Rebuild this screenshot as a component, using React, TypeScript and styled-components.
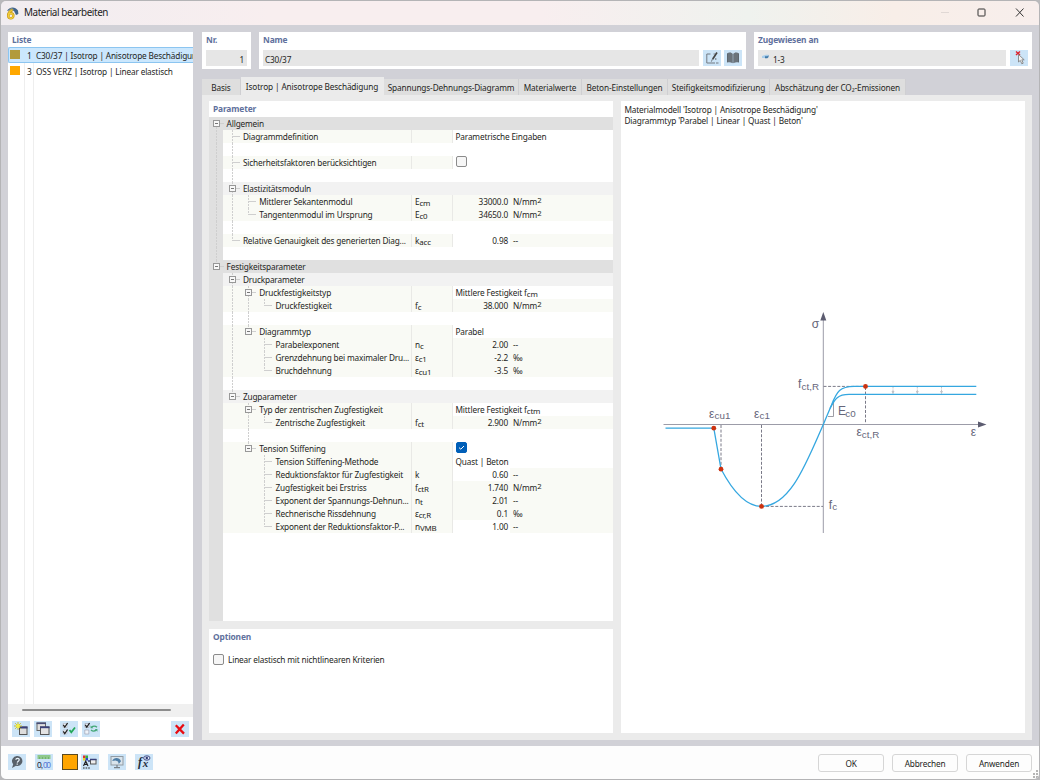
import { Fragment, ReactNode } from "react";
import styled, { createGlobalStyle, css } from "styled-components";

const GlobalStyle = createGlobalStyle`
  * { box-sizing: border-box; }
  html, body { margin: 0; padding: 0; }
  body {
    width: 1040px;
    height: 780px;
    overflow: hidden;
    background: #b9b9bb;
    font-family: "Noto Sans", "Open Sans", sans-serif;
    font-size: 8.25px;
    letter-spacing: -0.16px;
    line-height: 13px;
    color: #1e1e22;
  }
`;

const Window = styled.div`
  display: flex;
  flex-direction: column;
  width: 1040px;
  height: 780px;
  background: #d1d1d7;
  border: 1px solid #b4b4b6;
  border-radius: 6px;
  overflow: hidden;
`;

const TitleBar = styled.header`
  display: flex;
  align-items: center;
  flex: none;
  height: 24px;
  padding: 0 14px 1px 5px;
  background: linear-gradient(90deg, #f1edf0 0%, #f8eeef 26%, #f8eeef 52%, #eff2ee 72%, #f8eee8 86%, #f7eeec 100%);
`;

const Title = styled.h1`
  flex: 1;
  margin: 0 0 0 5px;
  font-size: 9.9px;
  font-weight: 400;
  letter-spacing: -0.4px;
  color: #222;
`;

const WindowControls = styled.div`
  display: flex;
  align-items: center;
  gap: 28px;

  svg { display: block; }
`;

const Body = styled.main`
  display: flex;
  flex: none;
  gap: 9px;
  height: 721px;
  padding: 7px 7px 6px 7px;
`;

const Heading = styled.h2`
  flex: none;
  margin: 0;
  padding: 1px 4px 0;
  font-size: 8.4px;
  line-height: 14px;
  letter-spacing: -0.14px;
  font-weight: 700;
  color: #5f719d;
`;

const ListPanel = styled.aside`
  display: flex;
  flex-direction: column;
  flex: none;
  width: 185px;
  height: 708px;
  background: #fff;
`;

const ListRows = styled.div`
  flex: 1;
  min-height: 0;
  background: linear-gradient(90deg, transparent 16px, #eee 16px, #eee 17px, transparent 17px, transparent 25px, #eee 25px, #eee 26px, transparent 26px);
`;

const ListRow = styled.div<{ $selected?: boolean }>`
  display: flex;
  align-items: center;
  height: 15px;
  padding: 1px 0 0 1px;
  white-space: nowrap;
  overflow: hidden;
  border: 1px solid transparent;
  border-right: 0;
  ${(p) =>
    p.$selected &&
    css`
      height: 16px;
      background: #cbe7fd;
      border-color: #8cc5f0;
      border-radius: 2px 0 0 2px;
    `}
`;

const Swatch = styled.span<{ $color: string }>`
  flex: none;
  width: 9.5px;
  height: 9px;
  margin-bottom: 2px;
  background: ${(p) => p.$color};
`;

const ListNumber = styled.span`
  flex: none;
  width: 12px;
  margin-right: 4.5px;
  text-align: right;
`;

const ScrollTrack = styled.div`
  flex: none;
  height: 13px;
  padding: 5px 22px 0 14px;
  background: #f0f0f0;
`;

const ScrollThumb = styled.div`
  height: 2px;
  border-radius: 1px;
  background: #8c8c8c;
`;

const ListTools = styled.div`
  display: flex;
  flex: none;
  gap: 4px;
  height: 23px;
  padding: 4px 4px 0 4px;
`;

const IconButton = styled.button<{ $gapBefore?: number; $last?: boolean }>`
  display: flex;
  align-items: center;
  justify-content: center;
  flex: none;
  width: 18px;
  height: 16px;
  margin: 0 0 0 ${(p) => (p.$last ? "auto" : `${p.$gapBefore ?? 0}px`)};
  padding: 0;
  border: 0;
  background: #cce4f7;

  svg { display: block; }
`;

const Main = styled.section`
  display: flex;
  flex-direction: column;
  width: 830px;
`;

const TopFields = styled.div`
  display: flex;
  flex: none;
  gap: 8px;
  height: 37px;
`;

const FieldCard = styled.div<{ $width: number }>`
  width: ${(p) => p.$width}px;
  background: #fff;
`;

const FieldRow = styled.div`
  display: flex;
  gap: 3px;
  padding: 3px 4px 0;
`;

const Field = styled.div<{ $align?: string }>`
  display: flex;
  align-items: center;
  justify-content: ${(p) => p.$align ?? "flex-start"};
  flex: 1;
  height: 16px;
  padding: 2px 3px 0 2px;
  background: #e6e6e6;
`;

const Tabs = styled.nav`
  display: flex;
  align-items: flex-end;
  flex: none;
  height: 26px;
`;

const Tab = styled.div<{ $width: number; $active?: boolean }>`
  flex: none;
  width: ${(p) => p.$width}px;
  height: ${(p) => (p.$active ? 18 : 16)}px;
  line-height: ${(p) => (p.$active ? 20 : 17)}px;
  letter-spacing: -0.13px;
  text-align: center;
  white-space: nowrap;
  background: ${(p) => (p.$active ? "#ebebeb" : "#dedede")};
  border-right: 1px solid ${(p) => (p.$active ? "#ebebeb" : "#cfcfd2")};
`;

const TabPage = styled.div`
  display: flex;
  gap: 8px;
  flex: 1;
  padding: 6px 7px 7px;
  background: #ebebeb;
`;

const Column = styled.div`
  display: flex;
  flex-direction: column;
  gap: 8px;
  width: 404px;
`;

const Card = styled.div<{ $height: number }>`
  display: flex;
  flex-direction: column;
  height: ${(p) => p.$height}px;
  background: #fff;
`;

const Tree = styled.div`
  display: flex;
  flex-direction: column;
  flex: 1;
  margin-top: 1px;
  background: linear-gradient(90deg, #e0e0e0 14px, #fff 14px);
`;

type Kind = "group" | "section" | "param" | "blank";

const rowColor: Record<Kind, string> = {
  group: "#e0e0e0",
  section: "#f2f2f2",
  param: "#f9faf5",
  blank: "transparent",
};

const TreeRow = styled.div<{ $kind: Kind }>`
  display: flex;
  flex: none;
  height: 13px;
  line-height: 13px;
  white-space: nowrap;
  background: ${(p) =>
    p.$kind === "group"
      ? rowColor.group
      : `linear-gradient(90deg, transparent 14px, ${rowColor[p.$kind]} 14px)`};
`;

const LabelCell = styled.div`
  display: flex;
  flex: none;
  width: 202px;
`;

const line = "#cfcfcf";
const dash = `repeating-linear-gradient(180deg, ${line} 0 2px, transparent 2px 3px)`;

// one cell of the branch drawing: | pass, t tee, l corner, B/b/e boxes
const Branch = styled.span<{ $shape: string; $first?: boolean }>`
  display: flex;
  align-items: center;
  justify-content: center;
  flex: none;
  width: ${(p) => (p.$first ? 15.6 : 16.3)}px;
  height: 13px;
  background-repeat: no-repeat;
  ${(p) => {
    const stub = `linear-gradient(${line}, ${line})`;
    const parts: string[] = [];
    if ("|tb".includes(p.$shape)) parts.push(`${dash} 7px 0 / 1px 13px no-repeat`);
    if ("le".includes(p.$shape)) parts.push(`${dash} 7px 0 / 1px 7px no-repeat`);
    if (p.$shape === "B") parts.push(`${dash} 7px 7px / 1px 6px no-repeat`);
    if ("tlbeB".includes(p.$shape)) parts.push(`${stub} 8px 6px / 7px 1px no-repeat`);
    return parts.length ? `background: ${parts.join(",")};` : "";
  }}
`;

const Expander = styled.span`
  width: 7px;
  height: 7px;
  margin-right: 1px;
  border: 1px solid #989898;
  background: linear-gradient(#777, #777) 1px 2px / 3px 1px no-repeat #f8f8f8;
`;

const LabelText = styled.span`
  padding-left: 2px;
`;

const SymbolCell = styled.div`
  flex: none;
  width: 41px;
  padding-left: 3px;
  border-left: 1px solid #e9e9e6;
`;

const ValueCell = styled.div<{ $editable?: boolean }>`
  flex: none;
  width: 58px;
  padding-right: 2px;
  text-align: right;
  border-left: 1px solid #e9e9e6;
  background: ${(p) => (p.$editable ? "#fff" : "transparent")};
`;

const UnitCell = styled.div`
  flex: 1;
  padding-left: 3px;
`;

const WideValue = styled.div`
  flex: 1;
  padding-left: 2.5px;
  border-left: 1px solid #e9e9e6;
  background: #fff;
`;

const Sub = styled.span`
  position: relative;
  top: 1px;
  font-size: 7.9px;
`;

const Sup = styled.span`
  position: relative;
  top: -2px;
  font-size: 7.7px;
`;

const CheckBox = styled.span<{ $checked?: boolean }>`
  display: flex;
  align-items: center;
  justify-content: center;
  flex: none;
  width: 11px;
  height: 11px;
  border: 1px solid ${(p) => (p.$checked ? "#005fb8" : "#8b8b8b")};
  border-radius: 2px;
  background: ${(p) => (p.$checked ? "#005fb8" : "#f6f6f6")};
`;

const OptionRow = styled.label`
  display: flex;
  align-items: center;
  gap: 4px;
  padding: 9px 4px 0;
`;

const DiagramCard = styled.div`
  width: 404px;
  height: 632px;
  background: #fff;
`;

const DiagramText = styled.p`
  height: 24px;
  margin: 0;
  padding: 3px 3.5px 0;
  line-height: 11px;
`;

const Footer = styled.footer`
  display: flex;
  align-items: center;
  flex: 1;
  padding: 0 6px 1px 7px;
  background: #fdfdfd;
`;

const FooterButtons = styled.div`
  display: flex;
  gap: 8px;
  margin: 1px 0 0 auto;
`;

const PushButton = styled.button`
  width: 66px;
  height: 18px;
  padding: 1px 0 0;
  border: 1px solid #d6d6d6;
  border-radius: 3px;
  background: #fdfdfd;
  font: inherit;
  letter-spacing: inherit;
  line-height: 15px;
  color: #1e1e22;
`;

const ColorButton = styled.span`
  width: 16px;
  height: 16px;
  margin-left: 9px;
  border: 1px solid #5b4a20;
  background: #ffa500;
`;

interface RowData {
  branch: string;
  kind: Kind;
  label?: string;
  symbol?: [string, string];
  value?: string;
  unit?: string;
  editable?: boolean;
  wide?: ReactNode;
}

const blank = (branch: string): RowData => ({ branch, kind: "blank" });
const NMM = "N/mm2";

const rows: RowData[] = [
  { branch: "B", kind: "group", label: "Allgemein" },
  { branch: "|t", kind: "param", label: "Diagrammdefinition", wide: "Parametrische Eingaben" },
  blank("||"),
  { branch: "|t", kind: "param", label: "Sicherheitsfaktoren berücksichtigen", wide: <CheckBox /> },
  blank("||"),
  { branch: "|b", kind: "section", label: "Elastizitätsmoduln" },
  { branch: "||t", kind: "param", label: "Mittlerer Sekantenmodul", symbol: ["E", "cm"], value: "33000.0", unit: NMM },
  { branch: "||l", kind: "param", label: "Tangentenmodul im Ursprung", symbol: ["E", "c0"], value: "34650.0", unit: NMM },
  blank("||"),
  { branch: "|l", kind: "param", label: "Relative Genauigkeit des generierten Diag...", symbol: ["k", "acc"], value: "0.98", unit: "--", editable: true },
  blank("|"),
  { branch: "e", kind: "group", label: "Festigkeitsparameter" },
  { branch: " b", kind: "section", label: "Druckparameter" },
  { branch: " |b", kind: "param", label: "Druckfestigkeitstyp", wide: <>Mittlere Festigkeit f<Sub>cm</Sub></> },
  { branch: " ||l", kind: "param", label: "Druckfestigkeit", symbol: ["f", "c"], value: "38.000", unit: NMM },
  blank(" ||"),
  { branch: " |e", kind: "param", label: "Diagrammtyp", wide: "Parabel" },
  { branch: " | t", kind: "param", label: "Parabelexponent", symbol: ["n", "c"], value: "2.00", unit: "--" },
  { branch: " | t", kind: "param", label: "Grenzdehnung bei maximaler Dru...", symbol: ["ε", "c1"], value: "-2.2", unit: "‰" },
  { branch: " | l", kind: "param", label: "Bruchdehnung", symbol: ["ε", "cu1"], value: "-3.5", unit: "‰" },
  blank(" |"),
  { branch: " e", kind: "section", label: "Zugparameter" },
  { branch: "  b", kind: "param", label: "Typ der zentrischen Zugfestigkeit", wide: <>Mittlere Festigkeit f<Sub>ctm</Sub></> },
  { branch: "  |l", kind: "param", label: "Zentrische Zugfestigkeit", symbol: ["f", "ct"], value: "2.900", unit: NMM },
  blank("  |"),
  { branch: "  e", kind: "param", label: "Tension Stiffening", wide: <CheckBox $checked><svg width="9" height="9" viewBox="0 0 9 9"><path d="M2 4.6 3.8 6.2 7 3" fill="none" stroke="#fff" strokeWidth="1" /></svg></CheckBox> },
  { branch: "   t", kind: "param", label: "Tension Stiffening-Methode", wide: "Quast | Beton" },
  { branch: "   t", kind: "param", label: "Reduktionsfaktor für Zugfestigkeit", symbol: ["k", ""], value: "0.60", unit: "--", editable: true },
  { branch: "   t", kind: "param", label: "Zugfestigkeit bei Erstriss", symbol: ["f", "ctR"], value: "1.740", unit: NMM },
  { branch: "   t", kind: "param", label: "Exponent der Spannungs-Dehnun...", symbol: ["n", "t"], value: "2.01", unit: "--" },
  { branch: "   t", kind: "param", label: "Rechnerische Rissdehnung", symbol: ["ε", "cr,R"], value: "0.1", unit: "‰" },
  { branch: "   l", kind: "param", label: "Exponent der Reduktionsfaktor-P...", symbol: ["n", "VMB"], value: "1.00", unit: "--", editable: true },
];

function ParameterRow({ row }: { row: RowData }) {
  return (
    <TreeRow $kind={row.kind}>
      <LabelCell>
        {row.branch.split("").map((shape, i) => (
          <Branch key={i} $shape={shape} $first={i === 0}>
            {"Bbe".includes(shape) && <Expander />}
          </Branch>
        ))}
        <LabelText>{row.label}</LabelText>
      </LabelCell>
      {row.kind === "param" && (
        <Fragment>
          <SymbolCell>
            {row.symbol && (
              <>
                {row.symbol[0]}
                <Sub>{row.symbol[1]}</Sub>
              </>
            )}
          </SymbolCell>
          {row.wide ? (
            <WideValue>{row.wide}</WideValue>
          ) : (
            <>
              <ValueCell $editable={row.editable}>{row.value}</ValueCell>
              <UnitCell>{row.unit === NMM ? <>N/mm<Sup>2</Sup></> : row.unit}</UnitCell>
            </>
          )}
        </Fragment>
      )}
    </TreeRow>
  );
}

const SvgText = styled.text`
  font-family: "Liberation Sans", Arial, sans-serif;
  font-size: 12px;
  letter-spacing: 0;
  fill: #66667a;

  tspan { font-size: 9.8px; }
`;

function StressStrainDiagram() {
  return (
    <svg width="404" height="260" viewBox="621 300 404 260" style={{ display: "block", marginTop: 175 }}>
      <g stroke="#9c9ca8" strokeWidth="1" fill="none">
        <path d="M663.5 424.5H980M823.3 320V533" />
        <path d="M828 416.5H833.5V401" stroke="#85858f" strokeWidth=".8" />
      </g>
      <path d="M823.3 312 820.3 320.5H826.3ZM986.5 424.5 978 421.5V427.5Z" fill="#5c5c70" />
      <g stroke="#7a7a88" strokeWidth="1" strokeDasharray="3 1.6" fill="none">
        <path d="M823.5 386.4H865M865.5 387V423.5M721 425V469M761.5 425V506M761.5 506.4H823" />
      </g>
      <g stroke="#c2c2c6" strokeWidth="1" strokeDasharray="1.5 1">
        <path d="M893 387V394M917.3 387V394M941.5 387V394" />
      </g>
      <path d="M891.5 391H894.5L893 394ZM915.8 391H918.8L917.3 394ZM940 391H943L941.5 394Z" fill="#c2c2c6" />
      <g stroke="#35a7e0" strokeWidth="1.3" fill="none">
        <path d="M665.5 428.2H713.8L721 469C731 488 745 506.4 761.5 506.4C790 506.4 806 464 823.3 424.5L831.5 405C837 391 840 386.6 854 386.4H976.3" />
        <path d="M830 408.5C835 398.5 838 394.4 849 394.4H976.3" />
      </g>
      <g fill="#cc3210">
        <circle cx="713.8" cy="428.2" r="2.4" />
        <circle cx="721" cy="469.2" r="2.4" />
        <circle cx="761.5" cy="506.4" r="2.4" />
        <circle cx="865.5" cy="386.4" r="2.4" />
      </g>
      <SvgText x="811.7" y="328">σ</SvgText>
      <SvgText x="798" y="388">f<tspan x="801.6" y="390">ct,R</tspan></SvgText>
      <SvgText x="838" y="414.5">E<tspan x="845.3" y="416.5">c0</tspan></SvgText>
      <SvgText x="856.4" y="436">ε<tspan x="861.8" y="437.5">ct,R</tspan></SvgText>
      <SvgText x="970.8" y="436">ε</SvgText>
      <SvgText x="709" y="417.6">ε<tspan x="714.6" y="419">cu1</tspan></SvgText>
      <SvgText x="754" y="417.6">ε<tspan x="759.6" y="419">c1</tspan></SvgText>
      <SvgText x="828.8" y="508.5">f<tspan x="832.3" y="510.3">c</tspan></SvgText>
    </svg>
  );
}

const AppIcon = () => (
  <svg width="13" height="14" viewBox="0 0 13 14">
    <path d="M1 5C3 1 9 0 12 4.5L12.4 8 10 9 8 5 5 4Z" fill="#41648c" />
    <path d="M3 3 6 2 8 4 5 5Z" fill="#8a9a86" />
    <path d="M6.6 4.2C4 4.6 2.2 7 2.2 9.8" fill="none" stroke="#c99a1a" strokeWidth="2.6" />
    <circle cx="4.8" cy="9.8" r="2.6" fill="none" stroke="#c99a1a" strokeWidth="2.4" />
    <path d="M6.4 4C4 4.8 2.4 7 2.3 9.8" fill="none" stroke="#f2cf3c" strokeWidth="1.2" />
    <circle cx="4.8" cy="9.8" r="2.5" fill="none" stroke="#f2cf3c" strokeWidth="1.2" />
  </svg>
);

const NewIcon = () => (
  <svg width="18" height="16" viewBox="0 0 18 16">
    <rect x="7.5" y="6" width="7.5" height="7.5" fill="#ddd" stroke="#555" />
    <path d="M7 6.5H15.5" stroke="#39407a" strokeWidth="2" />
    <path d="M6 1V9M2 5H10M3.2 2.2 8.8 7.8M8.8 2.2 3.2 7.8" stroke="#c3bb20" strokeWidth=".9" />
    <circle cx="6" cy="5" r="1.9" fill="#f4ef45" />
  </svg>
);

const CopyIcon = () => (
  <svg width="18" height="16" viewBox="0 0 18 16">
    <rect x="3" y="2" width="8.5" height="7.5" fill="#dfdfdf" stroke="#666" />
    <path d="M2.5 2.3H12" stroke="#484d76" strokeWidth="1.6" />
    <rect x="6.5" y="6" width="8.5" height="7.5" fill="#e3e3e3" stroke="#555" />
    <path d="M6 6.3H15.5" stroke="#39407a" strokeWidth="1.8" />
  </svg>
);

const CheckAllIcon = () => (
  <svg width="18" height="16" viewBox="0 0 18 16" fill="none">
    <path d="M3 2.5H7V6.5H3ZM3 9H7V13H3Z" fill="#eef4fa" stroke="#aab" strokeWidth=".5" />
    <path d="M3.3 3.8 4.8 6 7.6 2M3.3 10.3 4.8 12.5 7.6 8.5" stroke="#222" strokeWidth="1.3" />
    <path d="M9.5 9 11.3 11.3 15 6.5" stroke="#24a85a" strokeWidth="1.8" />
  </svg>
);

const InvertIcon = () => (
  <svg width="18" height="16" viewBox="0 0 18 16" fill="none">
    <path d="M3 2.5H7V6.5H3ZM2.8 9H6.8V13H2.8Z" fill="#eef4fa" stroke="#99a" strokeWidth=".6" />
    <path d="M3.3 3.8 4.8 6 7.6 2" stroke="#222" strokeWidth="1.3" />
    <path d="M15 6.2C13.5 5 11 5 9.8 6M9 9C10.3 10.2 12.8 10.2 14.3 9.2" stroke="#45a878" strokeWidth="1.4" />
    <path d="M8.6 4.4V7.2H11.4ZM15.4 10.8V8H12.8Z" fill="#45a878" />
  </svg>
);

const DeleteIcon = () => (
  <svg width="12" height="12" viewBox="0 0 12 12">
    <path d="M1.8 2.2 10 10.6M9.8 1.6 1.8 10.6" stroke="#e80c12" strokeWidth="2.3" />
  </svg>
);

const EditIcon = () => (
  <svg width="18" height="16" viewBox="0 0 18 16" fill="none" stroke="#727a82">
    <path d="M7.5 4H3.8V13H12" />
    <path d="M14 2.5 9.6 9.2" strokeWidth="1.7" stroke="#444" />
    <path d="M8.4 11.6 9.6 8.6M10.5 4H12M12.8 8V10M13 13H15.5" />
  </svg>
);

const LibraryIcon = () => (
  <svg width="18" height="16" viewBox="0 0 18 16">
    <path d="M3 3.5C5 2 7.5 2.2 8.7 4V13.2C7 12 5 12 3 12.6ZM15 3.5C13 2 10.5 2.2 9.3 4V13.2C11 12 13 12 15 12.6Z" fill="#5d666e" />
    <path d="M5 3V12M13 3V12M7 3V12M11 3V12" stroke="#8f979d" strokeWidth=".6" />
  </svg>
);

const PickIcon = () => (
  <svg width="18" height="16" viewBox="0 0 18 16">
    <path d="M6 1.5 10 5M10 1.5 6 5" stroke="#dd2430" strokeWidth="1.4" />
    <path d="M8.5 4.5V12L10.3 10.4 11.8 13.8 13.2 13.2 11.8 9.8H14.2Z" fill="#f3f3f3" stroke="#777" strokeWidth=".8" />
  </svg>
);

const MemberIcon = () => (
  <svg width="8" height="8" viewBox="0 0 8 8" style={{ margin: "0 0 5px 1px" }}>
    <path d="M1 3 5 1.8H7.5V4.2L6 5H1Z" fill="#a9cdea" />
    <path d="M4 3.2H6.5L7.5 2V4L6.3 5.2H4Z" fill="#4079a9" />
  </svg>
);

const HelpIcon = () => (
  <svg width="18" height="16" viewBox="0 0 18 16">
    <path d="M9.5 2A5 5 0 1 1 8 11.8L4 14 5.2 10.2A5 5 0 0 1 9.5 2Z" fill="#58616a" />
    <path d="M7.8 5.8C8 3.8 11.4 3.9 11.2 6 11 7.3 9.5 7 9.3 8.6M9.2 9.6V10.8" fill="none" stroke="#e9f3fb" strokeWidth="1.2" />
  </svg>
);

const DecimalIcon = () => (
  <svg width="18" height="16" viewBox="0 0 18 16" fontFamily="Liberation Sans, sans-serif" fontSize="8.5">
    <rect x="2.5" y="1" width="13" height="4" fill="#8fc98c" />
    <path d="M4.5 3V5M7.5 3V5M10.5 3V5M13.5 3V5" stroke="#5fa35e" strokeWidth=".6" />
    <text x="2" y="14" fill="#223" textLength="6">0,</text>
    <text x="8" y="14" fill="#5579d4" textLength="8">00</text>
  </svg>
);

const DisplayIcon = () => (
  <svg width="18" height="16" viewBox="0 0 18 16">
    <path d="M2 1.5H4.5V4H2Z" fill="#e03030" />
    <path d="M4.5 1.5H7V4H4.5Z" fill="#30b040" />
    <path d="M2 4H4.5V6.5H2Z" fill="#e8d820" />
    <path d="M4.5 4H7V6.5H4.5Z" fill="#3048c8" />
    <path d="M2.5 12 4.7 7 7 12M3.4 10.4H6" stroke="#222" strokeWidth="1.1" fill="none" />
    <path d="M2 14H9" stroke="#222" strokeWidth="1.2" strokeDasharray="1.6 1" />
    <rect x="9.5" y="5.5" width="5.5" height="4.5" fill="#eee" stroke="#555" />
    <path d="M7 7H9M9 5.5H15.5" stroke="#39407a" strokeWidth="1.5" />
  </svg>
);

const MonitorIcon = () => (
  <svg width="18" height="16" viewBox="0 0 18 16">
    <rect x="3" y="2.5" width="12" height="8.5" fill="#d9e4ec" stroke="#929ba3" />
    <path d="M9 11V13.5M6 13.7H12" stroke="#777f86" strokeWidth="1.2" />
    <path d="M4.2 7C5.5 3 11.5 2.8 13 7.2L10.8 10 10 7.5 7.5 6.5Z" fill="#4f7ea6" />
  </svg>
);

const FormulaIcon = () => (
  <svg width="18" height="16" viewBox="0 0 18 16" fontFamily="Liberation Serif, serif" fontStyle="italic" fontWeight="700">
    <text x="3" y="12" fontSize="12" fill="#1f2f3c">f</text>
    <text x="7.8" y="13" fontSize="11" fill="#1f2f3c">x</text>
    <ellipse cx="11.8" cy="4" rx="3.2" ry="2.2" fill="#dfe7f7" stroke="#3f4b86" />
    <circle cx="11.8" cy="4" r="1.2" fill="#2f3b76" />
  </svg>
);

const SizeGrip = styled.svg`
  align-self: flex-end;
  flex: none;
  margin: 0 -6px 0 0;
`;

export default function App() {
  return (
    <>
      <GlobalStyle />
      <Window>
        <TitleBar>
          <AppIcon />
          <Title>Material bearbeiten</Title>
          <WindowControls>
            <svg width="9" height="9"><path d="M1 4.5H9" stroke="#e0d8d5" /></svg>
            <svg width="9" height="9"><rect x="1" y="1" width="7" height="7" rx=".8" fill="none" stroke="#333" /></svg>
            <svg width="11" height="9" viewBox="0 0 11 9"><path d="M2 .5 9.5 8.5M9.5 .5 2 8.5" stroke="#333" /></svg>
          </WindowControls>
        </TitleBar>

        <Body>
          <ListPanel>
            <Heading>Liste</Heading>
            <ListRows>
              <ListRow $selected>
                <Swatch $color="#b29b3c" />
                <ListNumber>1</ListNumber>C30/37 | Isotrop | Anisotrope Beschädigung
              </ListRow>
              <ListRow>
                <Swatch $color="#ffa800" />
                <ListNumber>3</ListNumber>OSS VERZ | Isotrop | Linear elastisch
              </ListRow>
            </ListRows>
            <ScrollTrack><ScrollThumb /></ScrollTrack>
            <ListTools>
              <IconButton><NewIcon /></IconButton>
              <IconButton><CopyIcon /></IconButton>
              <IconButton $gapBefore={4}><CheckAllIcon /></IconButton>
              <IconButton><InvertIcon /></IconButton>
              <IconButton $last><DeleteIcon /></IconButton>
            </ListTools>
          </ListPanel>

          <Main>
            <TopFields>
              <FieldCard $width={49}>
                <Heading>Nr.</Heading>
                <FieldRow><Field $align="flex-end">1</Field></FieldRow>
              </FieldCard>
              <FieldCard $width={487}>
                <Heading>Name</Heading>
                <FieldRow>
                  <Field>C30/37</Field>
                  <IconButton $gapBefore={1}><EditIcon /></IconButton>
                  <IconButton><LibraryIcon /></IconButton>
                </FieldRow>
              </FieldCard>
              <FieldCard $width={278}>
                <Heading>Zugewiesen an</Heading>
                <FieldRow>
                  <Field><MemberIcon />&nbsp;&nbsp;1-3</Field>
                  <IconButton $gapBefore={1}><PickIcon /></IconButton>
                </FieldRow>
              </FieldCard>
            </TopFields>

            <Tabs>
              <Tab $width={39}>Basis</Tab>
              <Tab $width={143} $active>Isotrop | Anisotrope Beschädigung</Tab>
              <Tab $width={135}>Spannungs-Dehnungs-Diagramm</Tab>
              <Tab $width={63}>Materialwerte</Tab>
              <Tab $width={86}>Beton-Einstellungen</Tab>
              <Tab $width={102}>Steifigkeitsmodifizierung</Tab>
              <Tab $width={136}>Abschätzung der CO₂-Emissionen</Tab>
            </Tabs>

            <TabPage>
              <Column>
                <Card $height={520}>
                  <Heading>Parameter</Heading>
                  <Tree>
                    {rows.map((row, i) => (
                      <ParameterRow key={i} row={row} />
                    ))}
                  </Tree>
                </Card>
                <Card $height={104}>
                  <Heading>Optionen</Heading>
                  <OptionRow><CheckBox />Linear elastisch mit nichtlinearen Kriterien</OptionRow>
                </Card>
              </Column>
              <DiagramCard>
                <DiagramText>
                  Materialmodell 'Isotrop | Anisotrope Beschädigung'<br />
                  Diagrammtyp 'Parabel | Linear | Quast | Beton'
                </DiagramText>
                <StressStrainDiagram />
              </DiagramCard>
            </TabPage>
          </Main>
        </Body>

        <Footer>
          <IconButton><HelpIcon /></IconButton>
          <IconButton $gapBefore={9}><DecimalIcon /></IconButton>
          <ColorButton />
          <IconButton $gapBefore={3}><DisplayIcon /></IconButton>
          <IconButton $gapBefore={9}><MonitorIcon /></IconButton>
          <IconButton $gapBefore={9}><FormulaIcon /></IconButton>
          <FooterButtons>
            <PushButton>OK</PushButton>
            <PushButton>Abbrechen</PushButton>
            <PushButton>Anwenden</PushButton>
          </FooterButtons>
          <SizeGrip width="7" height="8" viewBox="0 0 7 8" fill="#b5b5b5">
            <path d="M4 0H6V2H4ZM1 3H3V5H1ZM4 3H6V5H4ZM4 6H6V8H4ZM1 6H3V8H1Z" />
          </SizeGrip>
        </Footer>
      </Window>
    </>
  );
}
